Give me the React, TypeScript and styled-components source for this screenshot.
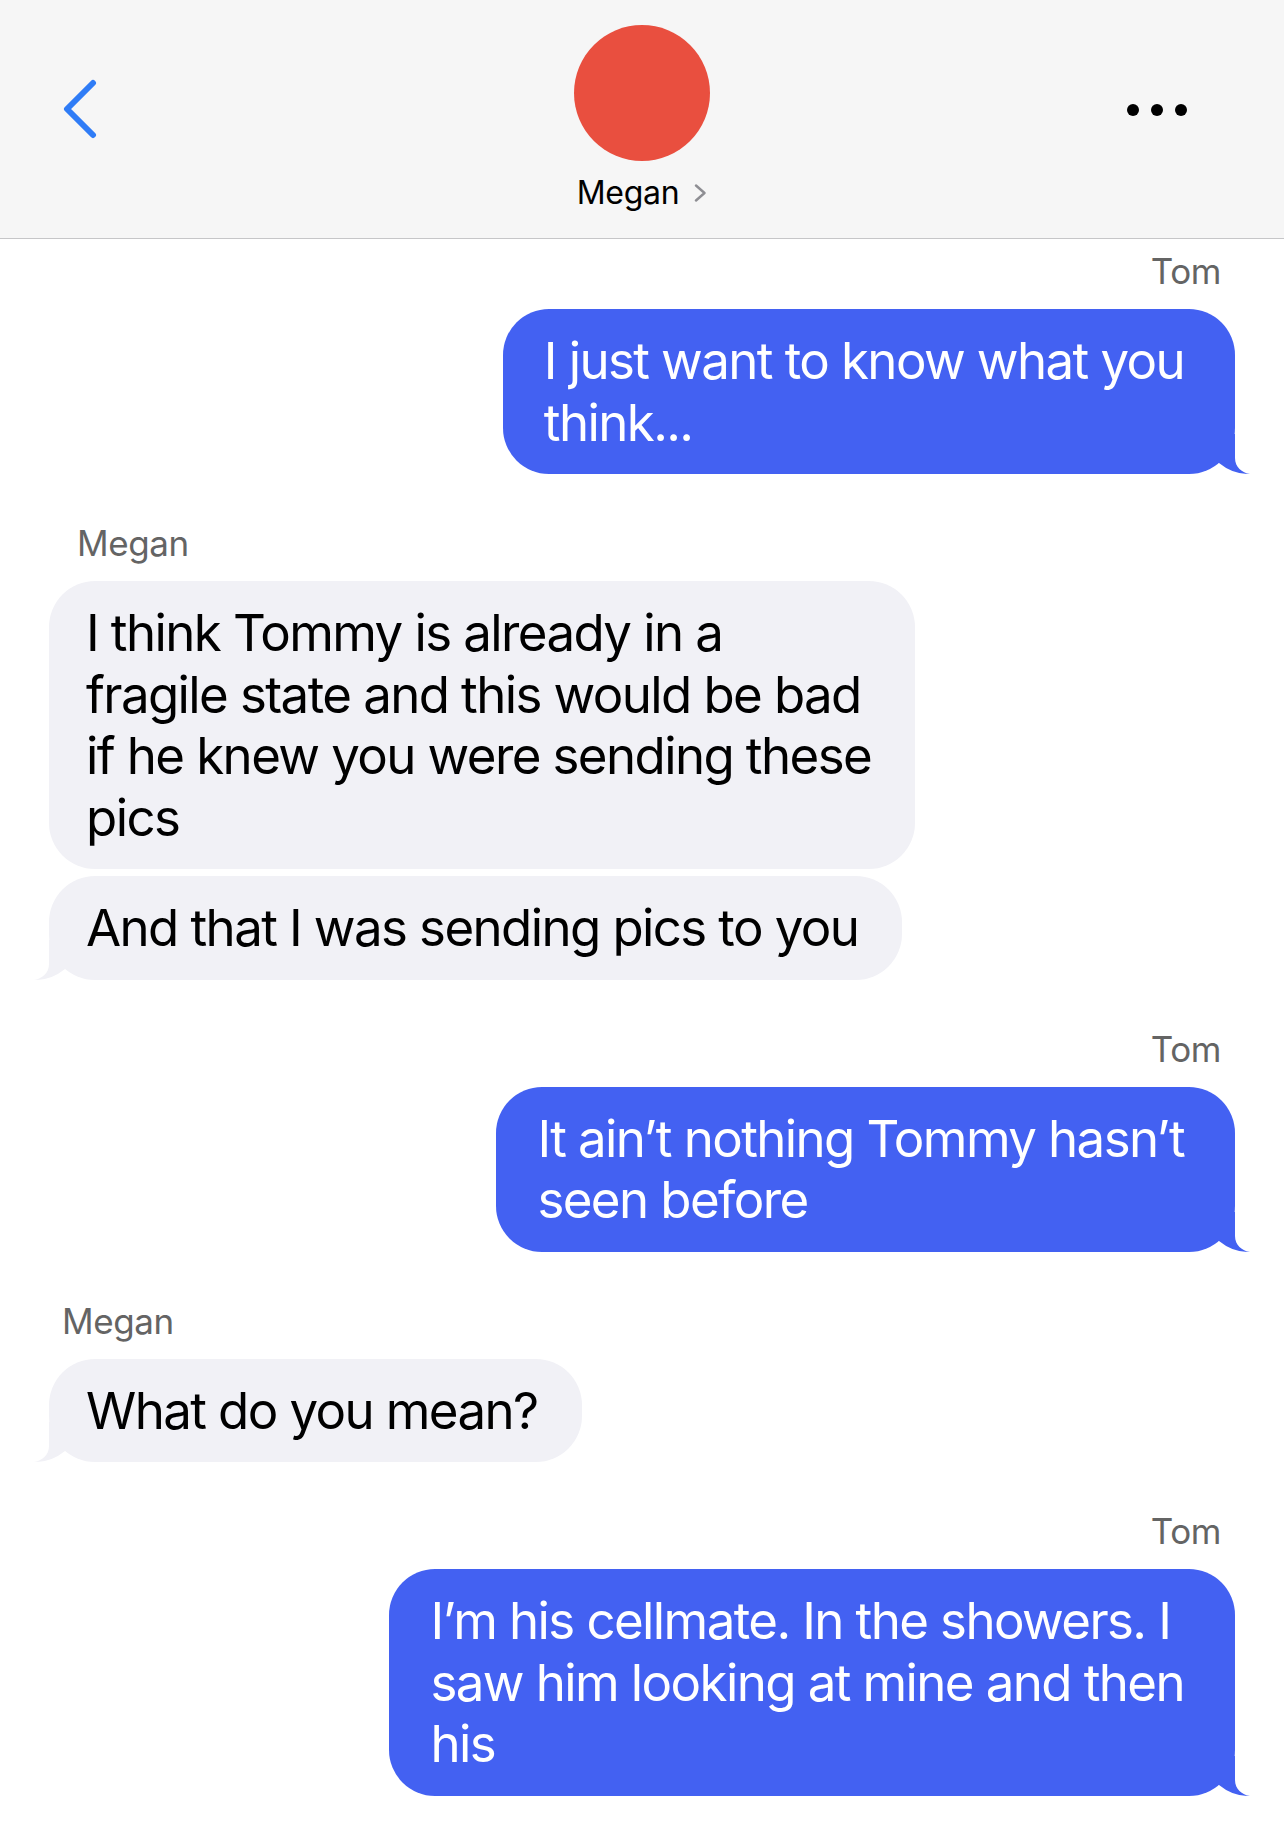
import React from "react";
import styled, { createGlobalStyle } from "styled-components";

type Side = "sent" | "received";

const GlobalStyle = createGlobalStyle`
  html, body { margin: 0; padding: 0; background: #ffffff; }
  body { font-family: Inter, "Noto Sans", Roboto, sans-serif; -webkit-font-smoothing: antialiased; }
  * { box-sizing: border-box; }
`;

const Screen = styled.div`
  width: 1284px;
  min-height: 1830px;
  background: #ffffff;
`;

const Header = styled.header`
  display: grid;
  grid-template-columns: 1fr auto 1fr;
  align-items: start;
  height: 239px;
  padding-top: 25px;
  background: #f6f6f6;
  border-bottom: 1px solid #c6c6c8;
`;

const BackButton = styled.button`
  justify-self: start;
  margin: 54px 0 0 62px;
  padding: 0;
  border: 0;
  background: none;
  display: flex;
`;

const Contact = styled.div`
  display: flex;
  flex-direction: column;
  align-items: center;
`;

const Avatar = styled.div`
  width: 136px;
  height: 136px;
  border-radius: 50%;
  background: #e94f3f;
`;

const NameRow = styled.div`
  display: flex;
  align-items: center;
  gap: 15px;
  margin-top: 13px;
  font-size: 32px;
  line-height: 38px;
  letter-spacing: -0.3px;
  color: #000000;
`;

const MoreButton = styled.div`
  justify-self: end;
  display: flex;
  gap: 12px;
  margin: 79px 97px 0 0;
`;

const Dot = styled.span`
  width: 12px;
  height: 12px;
  border-radius: 50%;
  background: #000000;
`;

const Thread = styled.main`
  display: flex;
  flex-direction: column;
  gap: 49px;
  padding: 12px 49px 36px;
`;

const Group = styled.section<{ $side: Side }>`
  display: flex;
  flex-direction: column;
  align-items: ${(p) => (p.$side === "sent" ? "flex-end" : "flex-start")};
  gap: 7px;
`;

const Sender = styled.div<{ $side: Side; $indent: number }>`
  margin-bottom: 11px;
  ${(p) => (p.$side === "sent" ? `padding-right: ${p.$indent}px;` : `padding-left: ${p.$indent}px;`)}
  font-size: 35px;
  line-height: 40px;
  letter-spacing: -0.4px;
  color: #646464;
`;

const Bubble = styled.div<{ $side: Side }>`
  position: relative;
  padding: ${(p) => (p.$side === "sent" ? "21px 51px 21px 41px" : "21px 44px 21px 37px")};
  border-radius: 46px;
  background: ${(p) => (p.$side === "sent" ? "#4361f2" : "#f1f1f6")};
  color: ${(p) => (p.$side === "sent" ? "#ffffff" : "#000000")};
  font-size: 51px;
  line-height: 61.5px;
  letter-spacing: -1.6px;
  white-space: nowrap;
`;

const TailSvg = styled.svg<{ $side: Side }>`
  position: absolute;
  bottom: 0;
  width: 46px;
  height: 40px;
  ${(p) => (p.$side === "sent" ? "right: -16px;" : "left: -16px; transform: scaleX(-1);")}
`;

const Tail: React.FC<{ side: Side }> = ({ side }) => (
  <TailSvg $side={side} viewBox="0 0 46 40" aria-hidden="true">
    <path
      d="M0 0 H30 V24 C30 33 37 39 45 40 Q28 40.5 14 29 L0 29 Z"
      fill={side === "sent" ? "#4361f2" : "#f1f1f6"}
    />
  </TailSvg>
);

type Msg = { lines: string[] };
type Conv = { side: Side; name: string; indent: number; messages: Msg[] };

const conversation: Conv[] = [
  { side: "sent", name: "Tom", indent: 14, messages: [{ lines: ["I just want to know what you", "think..."] }] },
  {
    side: "received",
    name: "Megan",
    indent: 28,
    messages: [
      {
        lines: [
          "I think Tommy is already in a",
          "fragile state and this would be bad",
          "if he knew you were sending these",
          "pics",
        ],
      },
      { lines: ["And that I was sending pics to you"] },
    ],
  },
  { side: "sent", name: "Tom", indent: 14, messages: [{ lines: ["It ain\u2019t nothing Tommy hasn\u2019t", "seen before"] }] },
  { side: "received", name: "Megan", indent: 13, messages: [{ lines: ["What do you mean?"] }] },
  {
    side: "sent",
    name: "Tom",
    indent: 14,
    messages: [{ lines: ["I\u2019m his cellmate. In the showers. I", "saw him looking at mine and then", "his"] }],
  },
];

export default function App() {
  return (
    <Screen>
      <GlobalStyle />
      <Header>
        <BackButton aria-label="Back">
          <svg width="36" height="60" viewBox="0 0 36 60">
            <path d="M31 4 L5 30 L31 56" fill="none" stroke="#2f7cf6" strokeWidth="6" strokeLinecap="round" strokeLinejoin="round" />
          </svg>
        </BackButton>
        <Contact>
          <Avatar />
          <NameRow>
            <span>Megan</span>
            <svg width="13" height="18" viewBox="0 0 13 18">
              <path d="M2 1.5 L10.5 9 L2 16.5" fill="none" stroke="#8e8e93" strokeWidth="2.4" strokeLinecap="round" strokeLinejoin="round" />
            </svg>
          </NameRow>
        </Contact>
        <MoreButton>
          <Dot />
          <Dot />
          <Dot />
        </MoreButton>
      </Header>
      <Thread>
        {conversation.map((g, gi) => (
          <Group key={gi} $side={g.side}>
            <Sender $side={g.side} $indent={g.indent}>
              {g.name}
            </Sender>
            {g.messages.map((m, mi) => (
              <Bubble key={mi} $side={g.side}>
                {m.lines.map((l, li) => (
                  <React.Fragment key={li}>
                    {li > 0 && <br />}
                    {l}
                  </React.Fragment>
                ))}
                {mi === g.messages.length - 1 && <Tail side={g.side} />}
              </Bubble>
            ))}
          </Group>
        ))}
      </Thread>
    </Screen>
  );
}
